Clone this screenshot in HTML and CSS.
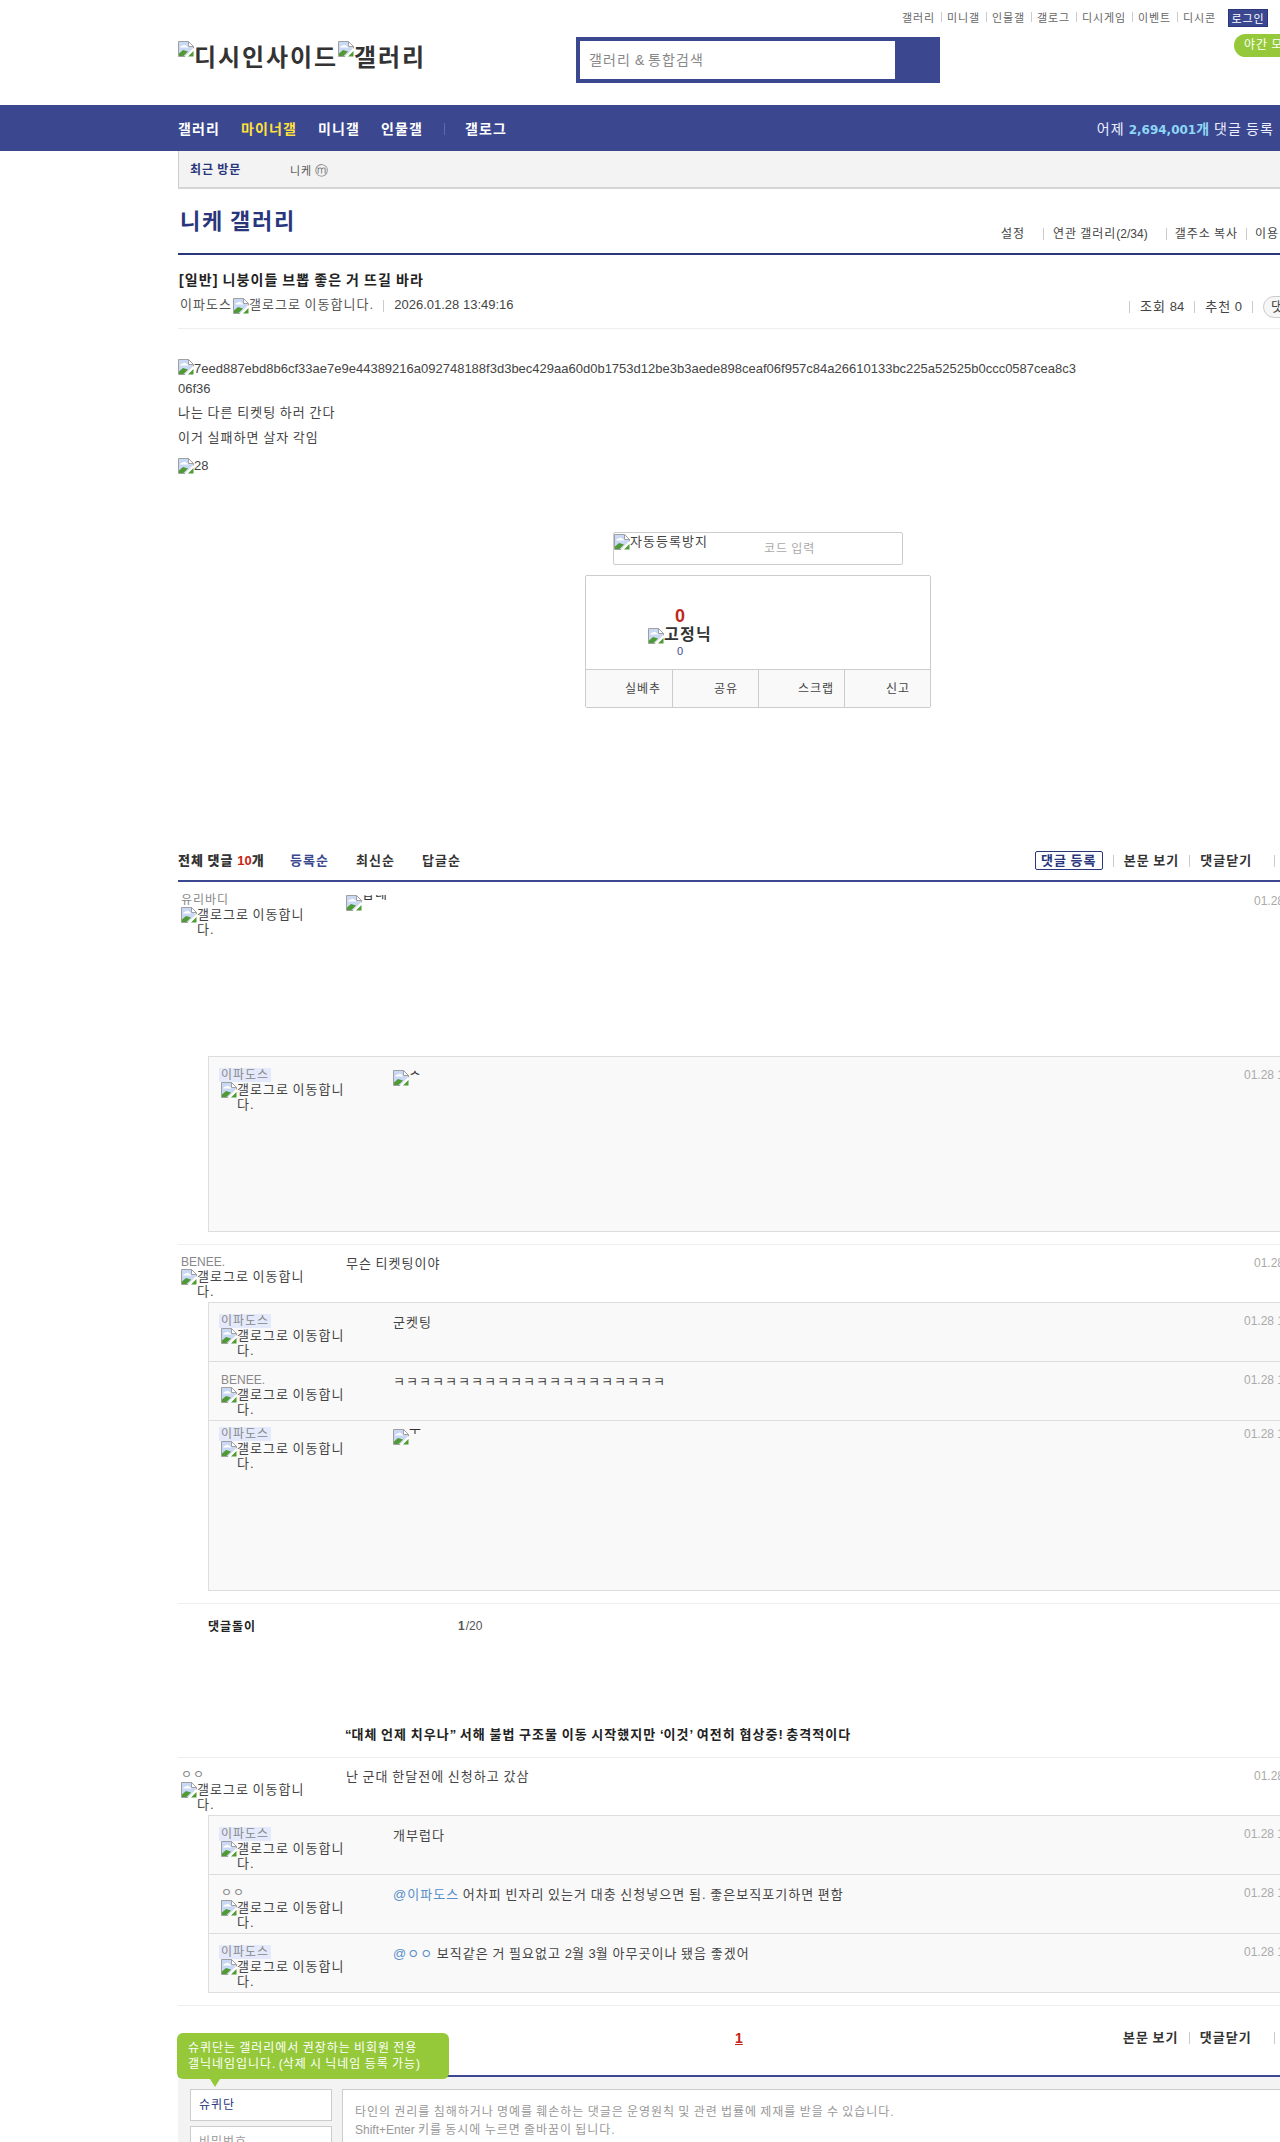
FILE: index.html
```html
<!DOCTYPE html>
<html lang="ko">
<head>
<meta charset="utf-8">
<title>니케 갤러리</title>
<link rel="stylesheet" href="styles.css">
</head>
<body>
<svg class="defs" width="0" height="0" aria-hidden="true">
  <symbol id="broken" viewBox="0 0 16 16">
    <path d="M.5.5H10.5L15.5 5.5V7L7 15.5H.5Z" fill="#c9d8f5" stroke="#a0a0a0"/>
    <path d="M10.5.5V5.5H15.5Z" fill="#fff" stroke="#a0a0a0"/>
    <path d="M2 6.5Q3 4 5 4.500Q7 3 8.500 5Q10 5 10.500 6.500Z" fill="#fff"/>
    <path d="M1 15V12.500L5 9L10 10.500L5.500 15Z" fill="#4f9a34"/>
    <path d="M10 15.500H15.500V10Z" fill="#4f9a34"/>
    <path d="M7.500 15.500L15.500 7.500" stroke="#fff" stroke-width="1.600"/>
  </symbol>
</svg>

<header class="top">
  <div class="util">
    <a>갤러리</a><a>미니갤</a><a>인물갤</a><a>갤로그</a><a>디시게임</a><a>이벤트</a><a>디시콘</a>
    <span class="login">로그인</span>
  </div>
  <div class="brand-row">
    <div class="logo"><svg class="ico"><use href="#broken"/></svg>디시인사이드<svg class="ico"><use href="#broken"/></svg>갤러리</div>
    <div class="search"><div class="search-box">갤러리 <span class="lat">&amp;</span> 통합검색</div></div>
    <span class="night">야간 모드</span>
  </div>
</header>

<nav class="nav">
  <div class="nav-in">
    <div class="nav-links"><a>갤러리</a><a class="on">마이너갤</a><a>미니갤</a><a>인물갤</a><i class="nav-sep"></i><a>갤로그</a></div>
    <div class="nav-count">어제 <b><span class="lat">2,694,001</span>개</b> 댓글 등록</div>
  </div>
</nav>

<main class="wrap">
  <div class="visit"><b>최근 방문</b><span>니케 <span class="mark">ⓜ</span></span></div>

  <div class="gall-head">
    <h1>니케 갤러리</h1>
    <div class="gall-links"><a>설정</a><i></i><a>연관 갤러리<span class="lat">(2/34)</span></a><i></i><a>갤주소 복사</a><i></i><a>이용 안내</a></div>
  </div>

  <section class="post-head">
    <h2>[일반] 니붕이들 브뽑 좋은 거 뜨길 바라</h2>
    <div class="post-meta">
      <div class="meta-l">
        <span class="writer">이파도스<svg class="ico"><use href="#broken"/></svg>갤로그로 이동합니다.</span><i></i><span class="date lat">2026.01.28 13:49:16</span>
      </div>
      <div class="meta-r"><i></i><span>조회 <span class="lat">84</span></span><i></i><span>추천 <span class="lat">0</span></span><i></i><span class="pill">댓글 <span class="lat">10</span></span></div>
    </div>
  </section>

  <article class="body">
    <div class="hash lat"><svg class="ico"><use href="#broken"/></svg>7eed887ebd8b6cf33ae7e9e44389216a092748188f3d3bec429aa60d0b1753d12be3b3aede898ceaf06f957c84a26610133bc225a52525b0ccc0587cea8c306f36</div>
    <p>나는 다른 티켓팅 하러 간다</p>
    <p>이거 실패하면 살자 각임</p>
    <div class="img28 lat"><svg class="ico"><use href="#broken"/></svg>28</div>
  </article>

  <div class="captcha">
    <span class="cap-img"><svg class="ico"><use href="#broken"/></svg>자동등록방지</span>
    <span class="cap-code">코드 입력</span>
  </div>

  <div class="rec">
    <div class="rec-top">
      <div class="rec-fix">
        <b class="rec-num lat">0</b>
        <span class="rec-label"><svg class="ico"><use href="#broken"/></svg>고정닉</span>
        <span class="rec-sub lat">0</span>
      </div>
    </div>
    <div class="rec-btns"><span>실베추</span><span>공유</span><span>스크랩</span><span>신고</span></div>
  </div>

  <div class="c-head">
    <div class="c-tabs"><b>전체 댓글 <em class="lat">10</em>개</b><a class="on">등록순</a><a>최신순</a><a>답글순</a></div>
    <div class="c-acts"><a class="boxed">댓글 등록</a><i></i><a>본문 보기</a><i></i><a>댓글닫기</a><i></i><a>새로고침</a></div>
  </div>

  <div class="cmt h174">
    <div class="who"><span class="nick">유리바디</span><span class="alt"><svg class="ico"><use href="#broken"/></svg>갤로그로 이동합니다.</span></div>
    <div class="txt top4"><span class="clip"><svg class="ico"><use href="#broken"/></svg><span>합녜</span></span></div>
    <time class="lat">01.28 14:01:22</time>
  </div>
  <div class="replies r1">
    <div class="cmt reply h175">
      <div class="who"><span class="nick me">이파도스</span><span class="alt"><svg class="ico"><use href="#broken"/></svg>갤로그로 이동합니다.</span></div>
      <div class="txt top4"><span class="clip"><svg class="ico"><use href="#broken"/></svg><span>숫</span></span></div>
      <time class="lat">01.28 14:03:10</time>
    </div>
  </div>

  <div class="cmt h58 ruled">
    <div class="who"><span class="nick lat">BENEE.</span><span class="alt"><svg class="ico"><use href="#broken"/></svg>갤로그로 이동합니다.</span></div>
    <div class="txt">무슨 티켓팅이야</div>
    <time class="lat">01.28 14:05:47</time>
  </div>
  <div class="replies r1">
    <div class="cmt reply h59">
      <div class="who"><span class="nick me">이파도스</span><span class="alt"><svg class="ico"><use href="#broken"/></svg>갤로그로 이동합니다.</span></div>
      <div class="txt">군켓팅</div>
      <time class="lat">01.28 14:06:12</time>
    </div>
    <div class="cmt reply h59">
      <div class="who"><span class="nick lat">BENEE.</span><span class="alt"><svg class="ico"><use href="#broken"/></svg>갤로그로 이동합니다.</span></div>
      <div class="txt">ㅋㅋㅋㅋㅋㅋㅋㅋㅋㅋㅋㅋㅋㅋㅋㅋㅋㅋㅋㅋㅋ</div>
      <time class="lat">01.28 14:06:58</time>
    </div>
    <div class="cmt reply h169 tight">
      <div class="who"><span class="nick me">이파도스</span><span class="alt"><svg class="ico"><use href="#broken"/></svg>갤로그로 이동합니다.</span></div>
      <div class="txt top4"><span class="clip"><svg class="ico"><use href="#broken"/></svg><span>뿌</span></span></div>
      <time class="lat">01.28 14:07:31</time>
    </div>
  </div>

  <div class="bot ruled">
    <div class="bot-row"><b>댓글돌이</b><span class="lat"><b>1</b>/20</span></div>
    <div class="bot-news"><span class="lat">“</span>대체 언제 치우나<span class="lat">”</span> 서해 불법 구조물 이동 시작했지만 <span class="lat">‘</span>이것<span class="lat">’</span> 여전히 협상중<span class="lat">!</span> 충격적이다</div>
  </div>

  <div class="cmt h58 ruled">
    <div class="who"><span class="nick">ㅇㅇ</span><span class="alt"><svg class="ico"><use href="#broken"/></svg>갤로그로 이동합니다.</span></div>
    <div class="txt">난 군대 한달전에 신청하고 갔삼</div>
    <time class="lat">01.28 14:12:05</time>
  </div>
  <div class="replies r1">
    <div class="cmt reply h59">
      <div class="who"><span class="nick me">이파도스</span><span class="alt"><svg class="ico"><use href="#broken"/></svg>갤로그로 이동합니다.</span></div>
      <div class="txt">개부럽다</div>
      <time class="lat">01.28 14:13:44</time>
    </div>
    <div class="cmt reply h59">
      <div class="who"><span class="nick">ㅇㅇ</span><span class="alt"><svg class="ico"><use href="#broken"/></svg>갤로그로 이동합니다.</span></div>
      <div class="txt"><a class="at">@이파도스</a> 어차피 빈자리 있는거 대충 신청넣으면 됨. 좋은보직포기하면 편함</div>
      <time class="lat">01.28 14:15:02</time>
    </div>
    <div class="cmt reply h59">
      <div class="who"><span class="nick me">이파도스</span><span class="alt"><svg class="ico"><use href="#broken"/></svg>갤로그로 이동합니다.</span></div>
      <div class="txt"><a class="at">@ㅇㅇ</a> 보직같은 거 필요없고 <span class="lat">2</span>월 <span class="lat">3</span>월 아무곳이나 됐음 좋겠어</div>
      <time class="lat">01.28 14:16:19</time>
    </div>
  </div>

  <div class="pager ruled-top">
    <a class="cur lat">1</a>
    <div class="c-acts"><a>본문 보기</a><i></i><a>댓글닫기</a><i></i><a>새로고침</a></div>
  </div>

  <section class="write">
    <div class="tip">슈퀴단는 갤러리에서 권장하는 비회원 전용<br>갤닉네임입니다<span class="lat">. (</span>삭제 시 닉네임 등록 가능<span class="lat">)</span></div>
    <div class="inputs">
      <div class="field name">슈퀴단</div>
      <div class="field pw">비밀번호</div>
    </div>
    <div class="area">타인의 권리를 침해하거나 명예를 훼손하는 댓글은 운영원칙 및 관련 법률에 제재를 받을 수 있습니다.<br><span class="lat">Shift+Enter</span> 키를 동시에 누르면 줄바꿈이 됩니다.</div>
  </section>
</main>
</body>
</html>
```
FILE: styles.css
```css
* { box-sizing: border-box; letter-spacing: .08em; word-spacing: -.08em; }
.lat { letter-spacing: 0; word-spacing: 0; }
html, body { height: 2142px; overflow: hidden; }
body {
  margin: 0;
  width: 1280px;
  background: #fff;
  color: #333;
  font: 12px/1.2 "Liberation Sans", "Noto Sans CJK KR", sans-serif;
}
a { color: inherit; text-decoration: none; }
i, em, time { font-style: normal; }
.defs { position: absolute; }
.ico { width: 16px; height: 16px; flex: none; display: inline-block; vertical-align: top; }

/* header */
.top { height: 105px; padding-left: 178px; position: relative; }
.util {
  position: absolute; top: 9px; right: 12px;
  display: flex; align-items: center;
  font-size: 11px; color: #666; height: 18px;
}
.util a { padding: 0 6px; position: relative; line-height: 18px; margin-top: -1px; }
.util a + a::before {
  content: ""; position: absolute; left: 0; top: 3px; height: 10px; width: 1px; background: #ccc;
}
.login {
  margin-left: 6px; width: 40px; height: 18px; line-height: 18px; text-align: center;
  background: #3b4890; border: 1px solid #29367c; color: #fff; font-size: 11px; white-space: nowrap;
}
.brand-row { display: flex; height: 105px; padding-top: 37px; }
.logo {
  width: 398px; margin-top: 4px;
  font-size: 24px; font-weight: 700; line-height: 34px; color: #333; white-space: nowrap;
}
.logo .ico { margin-top: 0; }
.search {
  width: 364px; height: 46px; background: #3b4890; padding: 4px 45px 4px 4px;
}
.search-box {
  height: 38px; background: #fff; line-height: 38px; padding-left: 9px; font-size: 14px; color: #888;
}
.night {
  position: absolute; left: 1234px; top: 34px; width: 90px; height: 23px; line-height: 23px;
  padding-left: 10px; border-radius: 12px; background: #95c93a; color: #fff; font-size: 12px; white-space: nowrap;
}

/* nav */
.nav { height: 46px; background: #3b4890; color: #fff; }
.nav-in { display: flex; justify-content: space-between; padding: 2px 6px 0 178px; height: 46px; align-items: center; }
.nav-links { display: flex; align-items: center; font-size: 14px; font-weight: 700; }
.nav-links a { margin-right: 21px; white-space: nowrap; }
.nav-links .on { color: #ffe13c; }
.nav-sep { width: 1px; height: 12px; background: #5f6ba8; margin: 0 20px 0 0; }
.nav-count { font-size: 14px; white-space: nowrap; color: #eef; }
.nav-count b { color: #8dd7f7; }
.nav-count .lat { font-family: "DejaVu Sans", sans-serif; font-size: 12px; }

/* page */
.wrap { margin-left: 178px; width: 1160px; }
.visit {
  height: 38px; background: #f3f3f3; border-left: 1px solid #ccc; border-bottom: 2px solid #d5d5d5;
  display: flex; align-items: center; padding: 3px 0 0 11px;
}
.visit b { color: #29367c; width: 100px; font-size: 12px; }
.visit span { color: #555; font-size: 11px; }
.visit .mark { font-family: "DejaVu Sans", sans-serif; font-size: 13px; letter-spacing: 0; color: #777; }

.gall-head {
  height: 66px; border-bottom: 2px solid #29367c; display: flex; justify-content: space-between;
  padding: 15px 0 0 2px;
}
.gall-head h1 { margin: 0; font-size: 22px; line-height: 36px; font-weight: 700; color: #29367c; }
.gall-links { display: flex; align-items: center; height: 14px; margin-top: 23px; font-size: 12px; color: #444; margin-left: auto; white-space: nowrap; width: 337px; }
.gall-links i { width: 1px; height: 12px; background: #ccc; margin: 0 8px; }
.gall-links i:nth-of-type(1) { margin: 0 9px 0 18px; }
.gall-links i:nth-of-type(2) { margin: 0 8px 0 18px; }

.post-head { height: 74px; border-bottom: 1px solid #eee; padding: 15px 0 0 0; }
.post-head h2 { margin: 0; font-size: 14px; line-height: 20px; font-weight: 700; color: #222; padding-left: 1px; }
.post-meta { display: flex; justify-content: space-between; margin-top: 7px; width: 1160px; }
.meta-l { display: flex; align-items: flex-start; font-size: 13px; padding-left: 2px; color: #555; white-space: nowrap; }
.meta-l .ico { margin: 1px 0 0 1px; }
.meta-l i { width: 1px; height: 12px; background: #ccc; margin: 3px 10px 0 9px; }
.date { font-size: 13px; color: #444; }
.meta-r { display: flex; align-items: center; font-size: 13px; color: #444; white-space: nowrap; height: 22px; margin-top: -1px; }
.meta-r i { width: 1px; height: 12px; background: #ccc; margin: 0 10px; }
.pill { width: 50px; height: 22px; border: 1px solid #ccc; background: #f6f6f6; border-radius: 11px; line-height: 20px; padding-left: 7px; margin-right: 25px; overflow: hidden; }

.body { height: 203px; padding-top: 30px; font-size: 13px; line-height: 20px; color: #444; }
.hash { width: 900px; word-break: break-all; }
.body p { margin: 5px 0 0; line-height: 20px; }
.hash + p { margin-top: 4px; }
.img28 { margin-top: 10px; height: 16px; line-height: 16px; }

.captcha {
  margin-left: 435px; width: 290px; height: 33px; border: 1px solid #ccc; border-radius: 2px;
  display: flex; font-size: 13px; color: #444;
}
.cap-img { width: 150px; line-height: 16px; white-space: nowrap; padding-top: 1px; }
.cap-code { color: #aaa; font-size: 12px; line-height: 32px; }

.rec { margin: 10px 0 0 407px; width: 346px; height: 133px; border: 1px solid #ccc; border-radius: 2px; }
.rec-top { height: 93px; position: relative; }
.rec-fix { width: 188px; padding-top: 30px; display: flex; flex-direction: column; align-items: center; }
.rec-num { color: #c0281a; font-size: 18px; line-height: 20px; }
.rec-label { font-size: 16px; font-weight: 700; line-height: 18px; white-space: nowrap; color: #333; }
.rec-label .ico { margin-top: 2px; }
.rec-sub { font-size: 11px; line-height: 14px; color: #3b4890; }
.rec-btns { display: grid; grid-template-columns: repeat(4, 1fr); height: 38px; background: #f9f9f9; border-top: 1px solid #ccc; }
.rec-btns span { text-align: right; padding-right: 20px; line-height: 38px; font-size: 12px; color: #444; border-left: 1px solid #ccc; }
.rec-btns span:first-child { border-left: 0; padding-right: 11px; }
.rec-btns span:nth-child(3) { padding-right: 10px; }

/* comments */
.c-head {
  margin-top: 135px; height: 39px; border-bottom: 2px solid #3b4890; display: flex; justify-content: space-between;
  align-items: center; padding-bottom: 2px;
}
.c-tabs { display: flex; font-size: 13px; font-weight: 700; color: #333; white-space: nowrap; }
.c-tabs b { width: 112px; }
.c-tabs em { color: #c62315; }
.c-tabs a { width: 66px; }
.c-tabs a.on { color: #3b4890; }
.c-acts { display: flex; align-items: center; font-size: 13px; font-weight: 700; color: #333; white-space: nowrap; width: 303px; }
.c-acts i { width: 1px; height: 12px; background: #ccc; margin: 0 10px; }
.c-acts .boxed { border: 1px solid #29367c; border-radius: 2px; height: 19px; line-height: 17px; padding: 0 5px; color: #29367c; }
.c-acts i:last-of-type { margin-left: 22px; }

.cmt { display: flex; padding: 11px 4px 0 3px; position: relative; color: #444; font-size: 13px; }
.who { width: 165px; flex: none; }
.nick { display: table; font-size: 12px; line-height: 14px; color: #888; }
.nick.me { background: #e4eafc; padding: 0 2px; margin-left: -2px; }
.alt { display: block; width: 130px; font-size: 13px; line-height: 15px; color: #444; }
.alt .ico { float: left; }
.txt { flex: 1; line-height: 18px; color: #444; white-space: nowrap; }
.top4 { margin-top: 2px; height: 16px; }
.clip { display: inline-block; height: 16px; overflow: hidden; vertical-align: top; }
.clip span { display: inline-block; vertical-align: top; font-size: 13px; margin-top: -10px; color: #333; }
.at { color: #5a8fc8; }
.cmt time { flex: none; font-size: 12px; line-height: 16px; color: #aaa; white-space: nowrap; width: 80px; }

.h174 { height: 174px; }
.h58 { height: 58px; padding-top: 10px; border-top: 1px solid #eee; }
.replies { margin-left: 30px; background: #f9f9f9; border: 1px solid #ddd; }
.reply { padding: 11px 13px 0 12px; }
.reply + .reply { border-top: 1px solid #ddd; }
.reply .who { width: 172px; }
.reply time { margin-top: -1px; }
.h59 { height: 59px; }
.h59:first-child { height: 58px; }
.h169 { height: 170px; }
.h175 { height: 174px; }
.tight { padding-top: 6px; }
.r1 { margin-bottom: 12px; }

.bot { height: 154px; border-top: 1px solid #eee; padding: 15px 0 0 30px; }
.bot-row { display: flex; font-size: 12px; color: #222; }
.bot-row > b { width: 250px; line-height: 16px; }
.bot-row span { color: #555; line-height: 14px; }
.bot-news { margin: 92px 0 0 137px; font-size: 13px; font-weight: 700; color: #222; white-space: nowrap; line-height: 16px; }

.pager { height: 70px; border-top: 1px solid #eee; position: relative; display: flex; align-items: flex-start; padding-top: 24px; }
.cur { color: #c62315; font-weight: 700; font-size: 14px; text-decoration: underline; margin-left: 557px; }
.pager .c-acts { margin-left: auto; width: 215px; }

.write { position: relative; background: #f3f3f3; border-top: 2px solid #3b4890; height: 200px; display: flex; padding: 12px 0 0 12px; }
.tip {
  position: absolute; left: -1px; top: -44px; width: 272px; height: 46px; padding: 7px 11px 0;
  background: #95c93a; color: #fff; border-radius: 6px; font-size: 12px; line-height: 16px; white-space: nowrap;
}
.tip::after {
  content: ""; position: absolute; left: 33px; top: 100%;
  border: 5px solid transparent; border-top: 8px solid #95c93a; border-bottom: 0;
}
.inputs { width: 142px; flex: none; }
.field { height: 32px; background: #fff; border: 1px solid #ccc; padding: 7px 8px; font-size: 12px; line-height: 16px; color: #29367c; }
.pw { margin-top: 5px; color: #999; }
.area { margin-left: 10px; flex: 1; height: 120px; background: #fff; border: 1px solid #ccc; padding: 13px 12px; font-size: 12px; line-height: 18px; color: #999; }
```
